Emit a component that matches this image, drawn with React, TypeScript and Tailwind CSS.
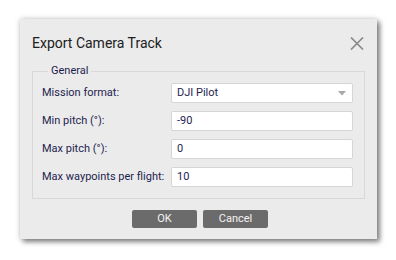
import React from "react";

const font = { fontFamily: 'Roboto, "Noto Sans", sans-serif' };

function Row({ label, children }: { label: string; children: React.ReactNode }) {
  return (
    <div className="flex h-[20px] items-center">
      <div className="w-[129px] whitespace-nowrap text-[11px] leading-[20px] text-[#1e1e50]">{label}</div>
      {children}
    </div>
  );
}

function Field({ value }: { value: string }) {
  return (
    <div className="flex h-[20px] w-[182px] items-center rounded-[2px] border border-[#d6d6d6] bg-white px-[5px] text-[11px] text-[#1e1e50]">
      {value}
    </div>
  );
}

export default function App() {
  return (
    <div className="h-[260px] w-[396px] bg-white pl-[20px] pt-[19px]" style={font}>
      <div className="flex h-[220px] w-[357px] flex-col bg-[#ebebeb] px-[12px] shadow-[0_0_6px_rgba(0,0,0,0.2),3px_3px_5px_rgba(0,0,0,0.45)]">
        <div className="flex h-[44px] items-center justify-between pt-[4px]">
          <div className="text-[14px] text-[#202020]">Export Camera Track</div>
          <svg width="14" height="13" viewBox="0 0 14 13" className="mr-[1px]">
            <path d="M1 0.5 L13 12.5 M13 0.5 L1 12.5" stroke="#8a8a8a" strokeWidth="1.7" fill="none" />
          </svg>
        </div>
        <fieldset className="h-[136px] border border-[#d8d8d8] pl-[9px] pr-[10px] pt-[4px]">
          <legend className="ml-[6px] px-[3px] text-[11px] leading-[16px] text-[#1e1e50]">General</legend>
          <div className="flex flex-col gap-[8px]">
            <Row label="Mission format:">
              <div className="flex h-[20px] w-[182px] items-center justify-between rounded-[2px] border border-[#d6d6d6] bg-white pl-[5px] pr-[6px] text-[11px] text-[#1e1e50]">
                <span>DJI Pilot</span>
                <svg width="8" height="5" viewBox="0 0 8 5">
                  <path d="M0 0 H8 L4 4.5 Z" fill="#a8a8a8" />
                </svg>
              </div>
            </Row>
            <Row label="Min pitch (°):">
              <Field value="-90" />
            </Row>
            <Row label="Max pitch (°):">
              <Field value="0" />
            </Row>
            <Row label="Max waypoints per flight:">
              <Field value="10" />
            </Row>
          </div>
        </fieldset>
        <div className="mt-[11px] flex justify-center gap-[6px] pl-[3px]">
          <button className="h-[18px] w-[65px] rounded-[2px] bg-[#6b6b6b] text-[11px] leading-[18px] text-[#f4f4f4]">OK</button>
          <button className="h-[18px] w-[65px] rounded-[2px] bg-[#6b6b6b] text-[11px] leading-[18px] text-[#f4f4f4]">Cancel</button>
        </div>
      </div>
    </div>
  );
}
